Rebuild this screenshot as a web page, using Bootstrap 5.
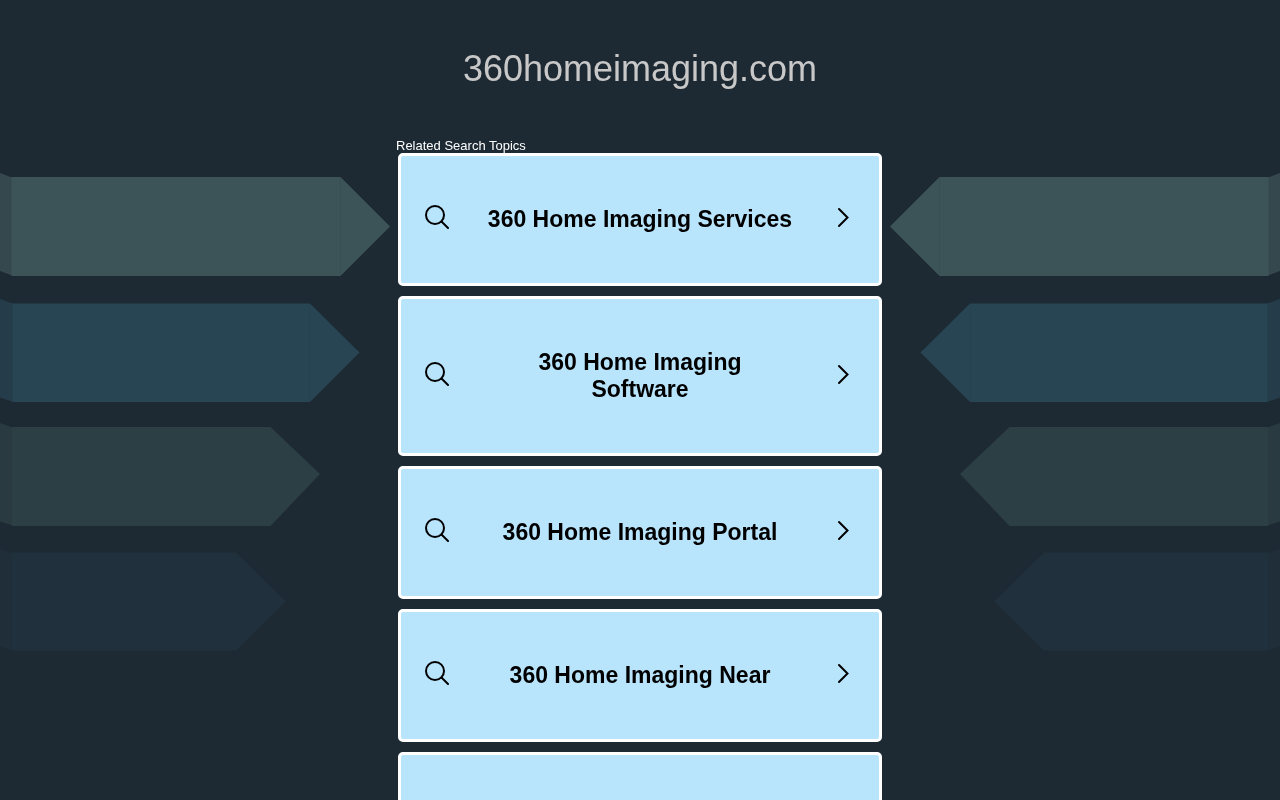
<!DOCTYPE html>
<html lang="en">
<head>
<meta charset="utf-8">
<meta name="viewport" content="width=device-width, initial-scale=1">
<title>360homeimaging.com</title>
<link href="https://cdn.jsdelivr.net/npm/bootstrap@5.3.0/dist/css/bootstrap.min.css" rel="stylesheet">
<style>
  body { background: #1e2a33; font-family: "Liberation Sans", Arial, sans-serif; }
  .backdrop { z-index: -1; }
  .domain { color: #c8c8c8; font-size: 36px; line-height: 42px; padding: 48px 0; }
  .topics { max-width: 488px; }
  .topics-label { color: #fff; font-size: 13px; line-height: 15px; }
  .topic-list { gap: 10px; padding: 0 2px; }
  .topic { background: #b8e4fc; border: 3px solid #fff; border-radius: 5px; color: #000; }
  .topic:hover { background: #d2eefd; }
  .topic-side { flex: 0 0 86px; padding: 0 30px 5px 24px; }
  .topic-text { font-size: 23px; line-height: 27px; padding: 50px 0; }
  .topic svg { fill: none; stroke: #000; stroke-width: 2; stroke-linecap: round; display: block; }
</style>
</head>
<body>
<!-- Arrow banners, mirrored on the right -->
<svg class="backdrop position-fixed top-0 start-0 w-100 h-100" viewBox="0 0 1280 800" preserveAspectRatio="xMidYMin slice" aria-hidden="true">
  <defs>
    <g id="arrows">
      <path fill="#34484e" d="M0 173L12 177.500V275.500L0 271z"/>
      <path fill="#3c5457" d="M11.500 177H340.500L390 226.500L340.500 276H11.500z"/>
      <path fill="#253d4a" d="M0 299L13 303.500V402L0 397.500z"/>
      <path fill="#284553" d="M12.500 303.500H310L359.500 352.500L310 402H12.500z"/>
      <path fill="#293a41" d="M0 423L13 427.500V525.500L0 521.500z"/>
      <path fill="#2c3f44" d="M12 427H270.500L320 474L270.500 526H12z"/>
      <path fill="#1f2e39" d="M0 548.500L12 552.500V650.500L0 646.500z"/>
      <path fill="#20313d" d="M12 552.500H236L285.500 601.500L236 650.500H12z"/>
      <path fill="none" stroke="#1e2a33" stroke-opacity=".12" d="M340.500 177V276M309.500 303V402M235.500 552V650"/>
    </g>
  </defs>
  <use href="#arrows"/>
  <use href="#arrows" transform="translate(1280 0) scale(-1 1)"/>
</svg>

<svg class="d-none" aria-hidden="true">
  <symbol id="search" viewBox="0 0 24 24"><circle cx="10" cy="10" r="9"/><path d="M16.500 16.500L23 23"/></symbol>
  <symbol id="chevron" viewBox="0 0 12 24"><path d="M2 4L10.500 12.500L2 21"/></symbol>
</svg>

<h1 class="domain text-center fw-normal m-0">360homeimaging.com</h1>

<main class="topics mx-auto pb-4">
  <h2 class="topics-label fw-normal m-0">Related Search Topics</h2>
  <nav class="topic-list d-flex flex-column" aria-label="Related Search Topics">
    <a href="#" class="topic d-flex align-items-center text-decoration-none">
      <span class="topic-side"><svg width="24" height="24"><use href="#search"/></svg></span>
      <span class="topic-text flex-fill text-center fw-bold">360 Home Imaging Services</span>
      <span class="topic-side d-flex justify-content-end"><svg width="12" height="24"><use href="#chevron"/></svg></span>
    </a>
    <a href="#" class="topic d-flex align-items-center text-decoration-none">
      <span class="topic-side"><svg width="24" height="24"><use href="#search"/></svg></span>
      <span class="topic-text flex-fill text-center fw-bold">360 Home Imaging Software</span>
      <span class="topic-side d-flex justify-content-end"><svg width="12" height="24"><use href="#chevron"/></svg></span>
    </a>
    <a href="#" class="topic d-flex align-items-center text-decoration-none">
      <span class="topic-side"><svg width="24" height="24"><use href="#search"/></svg></span>
      <span class="topic-text flex-fill text-center fw-bold">360 Home Imaging Portal</span>
      <span class="topic-side d-flex justify-content-end"><svg width="12" height="24"><use href="#chevron"/></svg></span>
    </a>
    <a href="#" class="topic d-flex align-items-center text-decoration-none">
      <span class="topic-side"><svg width="24" height="24"><use href="#search"/></svg></span>
      <span class="topic-text flex-fill text-center fw-bold">360 Home Imaging Near</span>
      <span class="topic-side d-flex justify-content-end"><svg width="12" height="24"><use href="#chevron"/></svg></span>
    </a>
    <a href="#" class="topic d-flex align-items-center text-decoration-none">
      <span class="topic-side"><svg width="24" height="24"><use href="#search"/></svg></span>
      <span class="topic-text flex-fill text-center fw-bold">360 Home Imaging</span>
      <span class="topic-side d-flex justify-content-end"><svg width="12" height="24"><use href="#chevron"/></svg></span>
    </a>
  </nav>
</main>
<script src="https://cdn.jsdelivr.net/npm/bootstrap@5.3.0/dist/js/bootstrap.bundle.min.js"></script>
</body>
</html>
